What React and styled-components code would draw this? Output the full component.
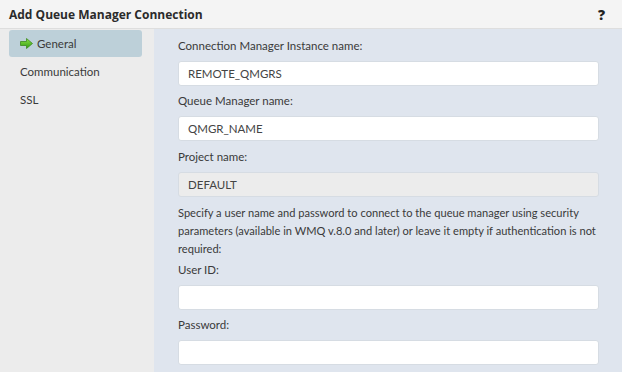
import React from "react";
import styled, { createGlobalStyle } from "styled-components";

const Global = createGlobalStyle`
  html, body { margin: 0; padding: 0; background: #ffffff; }
  body { font-family: Lato, "Open Sans", Arial, sans-serif; }
`;

const Dialog = styled.div`
  width: 622px;
  height: 372px;
  display: flex;
  flex-direction: column;
  background: #ffffff;
  color: #333;
`;

const Header = styled.div`
  height: 29px;
  flex: none;
  display: flex;
  align-items: center;
  justify-content: space-between;
  padding: 0 17px 0 9px;
  background: #f4f4f4;
  border-bottom: 1px solid #dedede;
  box-sizing: border-box;
`;

const Title = styled.div`
  font-family: "Open Sans", Arial, sans-serif;
  font-size: 12px;
  font-weight: 700;
  color: #2b2b2b;
`;

const Help = styled.div`
  font-family: "Open Sans", Arial, sans-serif;
  font-size: 14px;
  font-weight: 800;
  color: #222;
`;

const Body = styled.div`
  flex: 1;
  display: flex;
  min-height: 0;
`;

const Sidebar = styled.nav`
  width: 154px;
  flex: none;
  background: #ececec;
  padding: 1px 12px 0 9px;
  box-sizing: border-box;
  display: flex;
  flex-direction: column;
`;

const NavItem = styled.div`
  height: 27px;
  display: flex;
  align-items: center;
  gap: 4px;
  padding-left: 11px;
  border-radius: 3px;
  font-size: 11.5px;
  color: #3a3a3a;
  background: ${(p) => (p.$active ? "#bdd0d9" : "transparent")};
  margin-bottom: 1px;
`;

const Content = styled.div`
  flex: 1;
  background: #dfe5ee;
  padding: 9px 23px 0 24px;
  box-sizing: border-box;
  display: flex;
  flex-direction: column;
`;

const Label = styled.div`
  font-size: 11.5px;
  line-height: 16px;
  color: #3a3a3a;
  margin-bottom: 7px;
`;

const Input = styled.div`
  height: 25px;
  box-sizing: border-box;
  border: 1px solid #d6dce3;
  border-radius: 3px;
  background: ${(p) => (p.$disabled ? "#ececec" : "#ffffff")};
  display: flex;
  align-items: center;
  padding-left: 9px;
  font-size: 11.5px;
  color: #444;
  margin-bottom: ${(p) => p.$mb || 7}px;
`;

const Para = styled.p`
  margin: 1px 0 4px 0;
  font-size: 11.1px;
  line-height: 18px;
  color: #3a3a3a;
`;

const Arrow = () => (
  <svg width="13" height="11" viewBox="0 0 13 11">
    <defs>
      <linearGradient id="ag" x1="0" y1="0" x2="0" y2="1">
        <stop offset="0" stopColor="#8fe04a" />
        <stop offset="1" stopColor="#2f9d12" />
      </linearGradient>
    </defs>
    <path d="M0.5 3.5 H6.5 V0.5 L12.5 5.5 L6.5 10.5 V7.5 H0.5 Z" fill="url(#ag)" stroke="#3c8a1e" strokeWidth="0.8" strokeLinejoin="round" />
  </svg>
);

export default function App() {
  return (
    <>
      <Global />
      <Dialog>
        <Header>
          <Title>Add Queue Manager Connection</Title>
          <Help>?</Help>
        </Header>
        <Body>
          <Sidebar>
            <NavItem $active>
              <Arrow />
              <span>General</span>
            </NavItem>
            <NavItem>Communication</NavItem>
            <NavItem>SSL</NavItem>
          </Sidebar>
          <Content>
            <Label>Connection Manager Instance name:</Label>
            <Input>REMOTE_QMGRS</Input>
            <Label>Queue Manager name:</Label>
            <Input $mb={8}>QMGR_NAME</Input>
            <Label>Project name:</Label>
            <Input $disabled $mb={6}>DEFAULT</Input>
            <Para>
              Specify a user name and password to connect to the queue manager using security
              parameters (available in WMQ v.8.0 and later) or leave it empty if authentication is not
              required:
            </Para>
            <Label>User ID:</Label>
            <Input $mb={7}></Input>
            <Label>Password:</Label>
            <Input></Input>
          </Content>
        </Body>
      </Dialog>
    </>
  );
}
